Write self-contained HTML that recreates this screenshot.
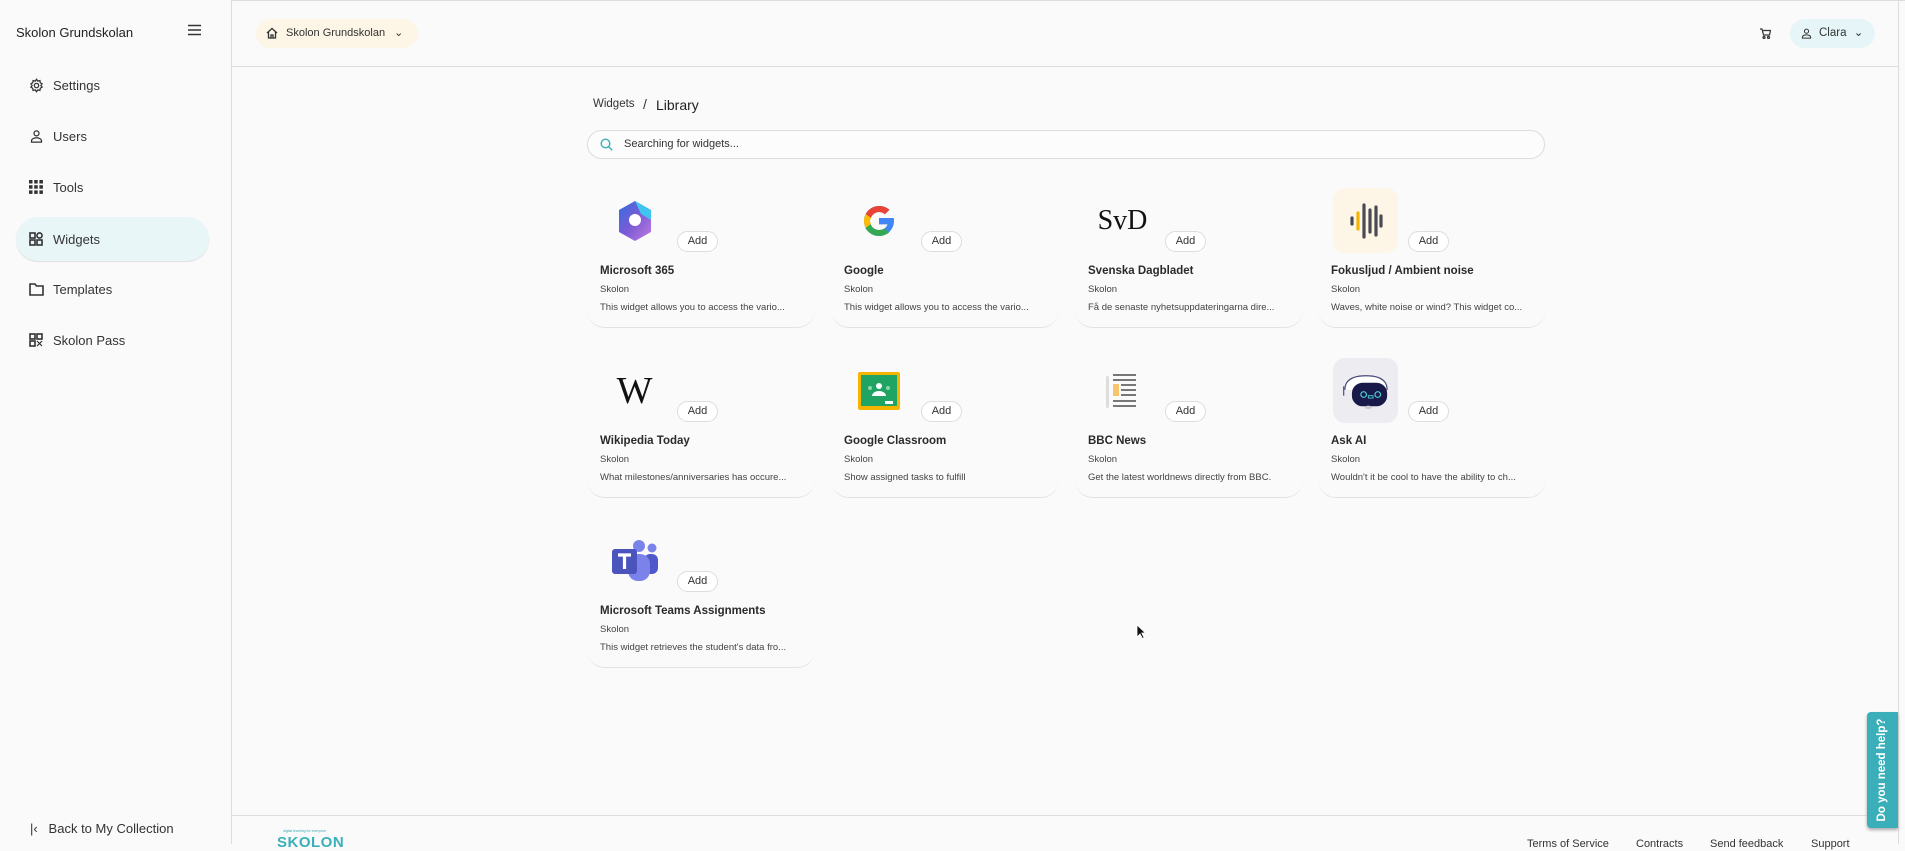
<!DOCTYPE html>
<html><head><meta charset="utf-8"><style>
*{box-sizing:border-box;margin:0;padding:0}
body{width:1905px;height:844px;overflow:hidden;background:#fafafa;font-family:"Liberation Sans",sans-serif;color:#222;position:relative}
.abs{position:absolute}
.side{left:0;top:0;width:232px;height:844px;border-right:1px solid #ddd;background:#fafafa}
.nav{position:absolute;left:16px;width:193px;height:44px;display:flex;align-items:center;font-size:13px;color:#333}
.nav svg{position:absolute;left:13px}
.nav span{position:absolute;left:37px}
.card{position:absolute;width:228px;height:140px;border-bottom:1px solid #e2e2e2;border-radius:0 0 18px 18px}
.ic{position:absolute;left:15px;top:0;width:65px;height:65px;border-radius:12px;display:flex;align-items:center;justify-content:center}
.add{position:absolute;left:90px;top:43px;width:41px;height:21px;border:1px solid #ddd;border-radius:11px;font-size:11px;text-align:center;line-height:19px;color:#333;background:#fff}
.t{position:absolute;left:13px;top:77px;font-size:11.5px;font-weight:bold;color:#2a2a2a;white-space:nowrap}
.s{position:absolute;left:13px;top:96px;font-size:9.5px;color:#444}
.d{position:absolute;left:13px;top:114px;font-size:9.5px;color:#444;white-space:nowrap}
</style></head><body>
<div class="abs" style="left:0;top:0;width:1905px;height:1px;background:#ddd"></div>
<div class="abs side">
 <div class="abs" style="left:16px;top:25px;font-size:13px;color:#222">Skolon Grundskolan</div>
 <svg class="abs" style="left:187px;top:24px" width="15" height="12"><path d="M1 1.5h13M1 6h13M1 10.5h13" stroke="#333" stroke-width="1.6"/></svg>
 <div class="nav" style="top:63px"><svg width="15" height="15" viewBox="0 0 24 24" fill="none" stroke="#333" stroke-width="2"><circle cx="12" cy="12" r="3.5"/><path d="M12 2l2 3 3.5-1 .5 3.5 3 2-2 2.5 2 2.5-3 2-.5 3.5-3.5-1-2 3-2-3-3.5 1-.5-3.5-3-2 2-2.5-2-2.5 3-2 .5-3.5 3.5 1z"/></svg><span>Settings</span></div>
 <div class="nav" style="top:114px"><svg width="15" height="15" viewBox="0 0 24 24" fill="none" stroke="#333" stroke-width="2"><circle cx="12" cy="7" r="4"/><path d="M4 21v-2c0-3 4-5 8-5s8 2 8 5v2z"/></svg><span>Users</span></div>
 <div class="nav" style="top:165px"><svg width="14" height="14" viewBox="0 0 14 14" fill="#333"><rect x="0" y="0" width="3.5" height="3.5"/><rect x="5.2" y="0" width="3.5" height="3.5"/><rect x="10.4" y="0" width="3.5" height="3.5"/><rect x="0" y="5.2" width="3.5" height="3.5"/><rect x="5.2" y="5.2" width="3.5" height="3.5"/><rect x="10.4" y="5.2" width="3.5" height="3.5"/><rect x="0" y="10.4" width="3.5" height="3.5"/><rect x="5.2" y="10.4" width="3.5" height="3.5"/><rect x="10.4" y="10.4" width="3.5" height="3.5"/></svg><span>Tools</span></div>
 <div class="nav" style="top:217px;background:#e8f6f8;border-radius:22px;box-shadow:0 1px 1px #ddd"><svg width="14" height="14" viewBox="0 0 14 14" fill="none" stroke="#333" stroke-width="1.6"><rect x="1" y="1" width="5" height="5"/><circle cx="10.5" cy="3.5" r="2.6"/><rect x="1" y="8" width="5" height="5"/><rect x="8" y="8" width="5" height="5"/></svg><span>Widgets</span></div>
 <div class="nav" style="top:267px"><svg width="15" height="13" viewBox="0 0 15 13" fill="none" stroke="#333" stroke-width="1.6"><path d="M1 1h5l1.5 2H14v9H1z"/></svg><span>Templates</span></div>
 <div class="nav" style="top:318px"><svg width="14" height="14" viewBox="0 0 14 14" fill="none" stroke="#333" stroke-width="1.6"><rect x="1" y="1" width="5" height="5"/><rect x="8" y="1" width="5" height="5"/><rect x="1" y="8" width="5" height="5"/><path d="M8 8l5 5M13 8l-5 5" stroke-width="1.2"/></svg><span>Skolon Pass</span></div>
 <div class="abs" style="left:30px;top:821px;font-size:13px;color:#333"><span style="font-size:13px">|&lsaquo;</span>&nbsp;&nbsp;&nbsp;Back to My Collection</div>
</div>
<div class="abs" style="left:232px;top:66px;width:1667px;height:1px;background:#ddd"></div>
<div class="abs" style="left:1898px;top:0;width:1px;height:844px;background:#ddd"></div>
<div class="abs" style="left:256px;top:19px;width:162px;height:29px;background:#fdf5e6;border-radius:15px;font-size:11px;line-height:29px;padding-left:30px;color:#333">Skolon Grundskolan <span style="margin-left:6px">&#8964;</span>
 <svg class="abs" style="left:10px;top:8px" width="12" height="12" viewBox="0 0 12 12" fill="none" stroke="#333" stroke-width="1.3"><path d="M1 6L6 1.5 11 6M2.5 5v6h7V5M5 11V8h2v3"/></svg></div>
<svg class="abs" style="left:1760px;top:28px" width="11" height="11" viewBox="0 0 11 11" fill="none" stroke="#333" stroke-width="1.2"><path d="M0 1h2l1.5 6h6l1-4.5H3"/><circle cx="4" cy="9.5" r="1"/><circle cx="8.5" cy="9.5" r="1"/></svg>
<div class="abs" style="left:1790px;top:19px;width:85px;height:29px;background:#e6f6f8;border-radius:15px;font-size:11.5px;line-height:29px;padding-left:29px;color:#333">Clara <span style="margin-left:4px">&#8964;</span>
 <svg class="abs" style="left:11px;top:9px" width="11" height="11" viewBox="0 0 24 24" fill="none" stroke="#333" stroke-width="2.2"><circle cx="12" cy="7" r="4.5"/><path d="M3 22v-2c0-3 4-5 9-5s9 2 9 5v2z"/></svg></div>
<div class="abs" style="left:593px;top:98px;font-size:11.5px;color:#333">Widgets</div>
<div class="abs" style="left:643px;top:96px;font-size:14px;color:#333">/</div>
<div class="abs" style="left:656px;top:97px;font-size:14px;color:#222">Library</div>
<div class="abs" style="left:587px;top:130px;width:958px;height:29px;border:1px solid #ddd;border-radius:15px;background:#fcfcfc;font-size:11px;line-height:27px;padding-left:36px;color:#333">Searching for widgets...
 <svg class="abs" style="left:12px;top:7px" width="13" height="13" viewBox="0 0 13 13" fill="none" stroke="#3aafb9" stroke-width="1.4"><circle cx="5.5" cy="5.5" r="4.3"/><path d="M8.7 8.7l3.5 3.5"/></svg></div>

<div class="card" style="left:587px;top:188px"><div class="ic"><svg width="40" height="44" viewBox="0 0 40 44"><defs><linearGradient id="m1" x1="0" y1="0" x2="1" y2="1"><stop offset="0" stop-color="#2f6fe0"/><stop offset=".5" stop-color="#7b5bd6"/><stop offset="1" stop-color="#c27be0"/></linearGradient></defs><path d="M20 2l16 9v22l-16 9-16-9V11z" fill="url(#m1)"/><path d="M20 2l16 9v10l-10-6z" fill="#3fc5f0"/><path d="M20 15a6 6 0 0 1 0 12 6 6 0 0 1 0-12z" fill="#fff"/></svg></div><div class="add">Add</div><div class="t">Microsoft 365</div><div class="s">Skolon</div><div class="d">This widget allows you to access the vario...</div></div>
<div class="card" style="left:831px;top:188px"><div class="ic"><svg width="36" height="36" viewBox="0 0 48 48"><path d="M43.6 20H24v8.5h11.3C34 33 29.6 36 24 36c-6.6 0-12-5.4-12-12s5.4-12 12-12c3 0 5.8 1.1 7.9 3l6-6C34.3 5.7 29.4 4 24 4 13 4 4 13 4 24s9 20 20 20 20-9 20-20c0-1.4-.1-2.7-.4-4z" fill="#4285f4"/><path d="M6.3 14.7l7 5.1C15.2 15.3 19.3 12 24 12c3 0 5.8 1.1 7.9 3l6-6C34.3 5.7 29.4 4 24 4 16.3 4 9.7 8.3 6.3 14.7z" fill="#ea4335"/><path d="M24 44c5.2 0 9.9-1.7 13.5-4.8l-6.2-5.3C29.2 35.3 26.7 36 24 36c-5.2 0-9.6-3.3-11.3-8l-7 5.4C9.5 39.6 16.2 44 24 44z" fill="#34a853"/><path d="M6.3 14.7C4.8 17.5 4 20.7 4 24s.8 6.5 2.3 9.3l7-5.4C12.5 26.8 12 25.4 12 24s.5-2.8 1.3-4.2z" fill="#fbbc05"/></svg></div><div class="add">Add</div><div class="t">Google</div><div class="s">Skolon</div><div class="d">This widget allows you to access the vario...</div></div>
<div class="card" style="left:1075px;top:188px"><div class="ic" style="font-family:'Liberation Serif',serif;font-size:28px;color:#111">SvD</div><div class="add">Add</div><div class="t">Svenska Dagbladet</div><div class="s">Skolon</div><div class="d">Få de senaste nyhetsuppdateringarna dire...</div></div>
<div class="card" style="left:1318px;top:188px"><div class="ic" style="background:#fdf5e6"><svg width="34" height="40" viewBox="0 0 34 40" stroke-linecap="round" stroke-width="3.2"><path d="M3 17v6" stroke="#4a4a55"/><path d="M9 12v16" stroke="#f4b400"/><path d="M15 4v32" stroke="#4a4a55"/><path d="M21 9v22" stroke="#4a4a55"/><path d="M27 6v28" stroke="#4a4a55"/><path d="M32 15v10" stroke="#4a4a55"/></svg></div><div class="add">Add</div><div class="t">Fokusljud / Ambient noise</div><div class="s">Skolon</div><div class="d">Waves, white noise or wind? This widget co...</div></div>

<div class="card" style="left:587px;top:358px"><div class="ic" style="font-family:'Liberation Serif',serif;font-size:38px;color:#111">W</div><div class="add">Add</div><div class="t">Wikipedia Today</div><div class="s">Skolon</div><div class="d">What milestones/anniversaries has occure...</div></div>
<div class="card" style="left:831px;top:358px"><div class="ic"><svg width="44" height="40" viewBox="0 0 44 40"><rect x="1" y="1" width="42" height="38" rx="2" fill="#f4b400"/><rect x="4" y="4" width="36" height="31" fill="#20a463"/><circle cx="22" cy="15" r="3" fill="#fff"/><path d="M15 25a7 5 0 0 1 14 0z" fill="#fff"/><circle cx="13" cy="17" r="2" fill="#8fd3ad"/><circle cx="31" cy="17" r="2" fill="#8fd3ad"/><rect x="28" y="30" width="8" height="3" fill="#fff"/></svg></div><div class="add">Add</div><div class="t">Google Classroom</div><div class="s">Skolon</div><div class="d">Show assigned tasks to fulfill</div></div>
<div class="card" style="left:1075px;top:358px"><div class="ic"><svg width="40" height="40" viewBox="0 0 40 40"><rect x="3" y="5" width="3" height="32" rx="1.5" fill="#ddd"/><path d="M10 4h23M10 9h23M18 14h15M18 19h15M18 24h15M10 30h23M10 35h23" stroke="#777" stroke-width="2"/><rect x="10" y="13" width="6" height="12" fill="#f6c66e"/></svg></div><div class="add">Add</div><div class="t">BBC News</div><div class="s">Skolon</div><div class="d">Get the latest worldnews directly from BBC.</div></div>
<div class="card" style="left:1318px;top:358px"><div class="ic" style="background:#ececf1"><svg width="54" height="40" viewBox="0 0 46 32"><path d="M5 15c0-9 8-12 18-12s18 3 18 12" fill="#fff" stroke="#4a4a7a" stroke-width="1"/><rect x="11" y="9" width="30" height="20" rx="9" fill="#1a1a4a"/><circle cx="21" cy="19" r="2.4" fill="none" stroke="#4ccfd0" stroke-width="1"/><circle cx="33" cy="19" r="2.4" fill="none" stroke="#4ccfd0" stroke-width="1"/><path d="M25 20h4v2h-4z" fill="none" stroke="#4ccfd0" stroke-width=".8"/><path d="M4 12v8" stroke="#4a4a7a" stroke-width="1"/><ellipse cx="25" cy="30" rx="3" ry="1.5" fill="#ccc"/></svg></div><div class="add">Add</div><div class="t">Ask AI</div><div class="s">Skolon</div><div class="d">Wouldn't it be cool to have the ability to ch...</div></div>

<div class="card" style="left:587px;top:528px"><div class="ic"><svg width="48" height="44" viewBox="0 0 48 44"><circle cx="41" cy="9" r="4.5" fill="#7b83eb"/><rect x="33" y="15" width="14" height="20" rx="6" fill="#5059c9"/><circle cx="28" cy="7" r="6" fill="#7b83eb"/><rect x="17" y="15" width="22" height="27" rx="10" fill="#7b83eb"/><rect x="1" y="10" width="25" height="25" rx="3" fill="#4b53bc"/><path d="M7 16h13M13.5 16v14" stroke="#fff" stroke-width="3.2"/></svg></div><div class="add">Add</div><div class="t">Microsoft Teams Assignments</div><div class="s">Skolon</div><div class="d">This widget retrieves the student's data fro...</div></div>

<svg class="abs" style="left:1136px;top:624px" width="10" height="15" viewBox="0 0 10 15"><path d="M1 1v12l3-3 2.5 4.5 1.6-.8L5.8 9H9.5z" fill="#111" stroke="#fff" stroke-width=".8"/></svg>

<div class="abs" style="left:232px;top:815px;width:1667px;height:1px;background:#ddd"></div>
<div class="abs" style="left:283px;top:829px;font-size:3.5px;color:#3aafb9">digital learning for everyone</div>
<div class="abs" style="left:277px;top:834px;font-size:15px;font-weight:bold;color:#3aafb9;letter-spacing:0.5px">SKOLON</div>
<div class="abs" style="left:1527px;top:838px;font-size:11px;color:#333">Terms of Service</div>
<div class="abs" style="left:1636px;top:838px;font-size:11px;color:#333">Contracts</div>
<div class="abs" style="left:1710px;top:838px;font-size:11px;color:#333">Send feedback</div>
<div class="abs" style="left:1811px;top:838px;font-size:11px;color:#333">Support</div>
<div class="abs" style="left:1867px;top:712px;width:31px;height:116px;background:#3aafb9;border-radius:4px 0 0 4px;box-shadow:0 2px 3px #aaa"><div class="abs" style="left:15px;top:58px;transform:translate(-50%,-50%) rotate(-90deg);white-space:nowrap;color:#fff;font-size:11.5px;font-weight:bold">Do you need help?</div></div>
</body></html>
